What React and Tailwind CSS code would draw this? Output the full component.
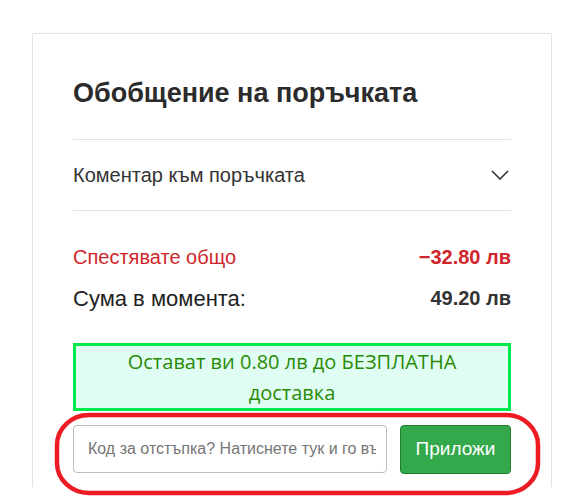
import React from 'react';

const Chevron = () => (
  <svg width="18" height="10" viewBox="0 0 18 10" fill="none" stroke="#333" strokeWidth="1.6">
    <path d="M1 1l8 8 8-8" />
  </svg>
);

export default function App() {
  return (
    <div className="relative w-[582px] h-[503px] overflow-hidden bg-white font-['Liberation_Sans',Arial,sans-serif]">
      <div className="ml-[32px] mt-[33px] w-[520px] h-[454px] border border-b-0 border-[#e3e3e3] px-[40px] pt-[45px]">
        <h2 className="text-[27px] leading-[29px] font-bold text-[#2b2b2b]">Обобщение на поръчката</h2>

        <div className="mt-[31px] border-t border-[#e2e2e2]" />
        <div className="flex items-center justify-between h-[70px] pr-[2px]">
          <span className="text-[20px] text-[#333]">Коментар към поръчката</span>
          <Chevron />
        </div>
        <div className="border-t border-[#e2e2e2]" />

        <div className="mt-[33px] flex items-center justify-between h-[26px]">
          <span className="text-[20px] text-[#d0262b]">Спестявате общо</span>
          <span className="text-[20px] font-bold text-[#d0262b]">−32.80 лв</span>
        </div>
        <div className="mt-[15px] flex items-center justify-between h-[26px]">
          <span className="text-[22px] text-[#222]">Сума в момента:</span>
          <span className="text-[20px] font-bold text-[#333]">49.20 лв</span>
        </div>

        <div className="mt-[32px] border-[3px] border-[#00ea4e] bg-[#e0fdf4] text-center text-[20px] leading-[31px] text-[#2a8a05] font-['Open_Sans',sans-serif] px-8">
          Остават ви 0.80 лв до БЕЗПЛАТНА доставка
        </div>

        <div className="mt-[14px] flex gap-[13px]">
          <input
            className="w-[314px] h-[48px] border border-[#bdbdbd] rounded-[4px] pl-[14px] pr-[10px] text-[16px] outline-none placeholder:text-[#757575]"
            placeholder="Код за отстъпка? Натиснете тук и го въведете"
          />
          <button className="flex-1 h-[49px] rounded-[4px] bg-[#34a94b] border border-[#1f7d2f] text-white text-[19px]">
            Приложи
          </button>
        </div>
      </div>

      <svg className="absolute left-0 top-0 pointer-events-none" width="582" height="503">
        <rect x="57" y="415" width="481" height="78" rx="32" ry="30" fill="none" stroke="#ed1c24" strokeWidth="4.5" />
      </svg>
    </div>
  );
}
